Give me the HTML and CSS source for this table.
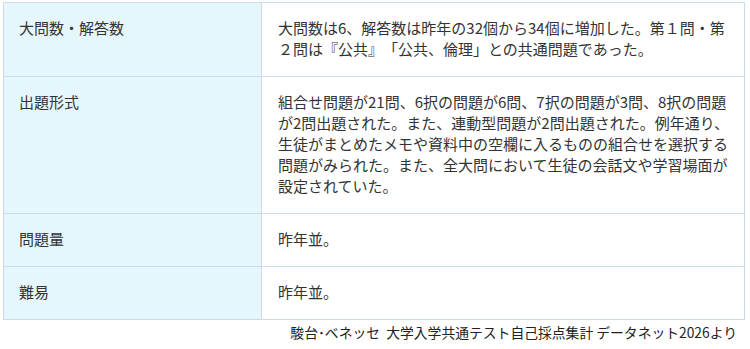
FILE: index.html
```html
<!DOCTYPE html>
<html lang="ja">
<head>
<meta charset="utf-8">
<link rel="stylesheet" href="styles.css">
</head>
<body>
<div class="wrap">
  <table class="info">
    <tbody>
      <tr>
        <th>大問数・解答数</th>
        <td>大問数は6、解答数は昨年の32個から34個に増加した。第１問・第２問は『公共』「公共、倫理」との共通問題であった。</td>
      </tr>
      <tr>
        <th>出題形式</th>
        <td>組合せ問題が21問、6択の問題が6問、7択の問題が3問、8択の問題が2問出題された。また、連動型問題が2問出題された。例年通り、生徒がまとめたメモや資料中の空欄に入るものの組合せを選択する問題がみられた。また、全大問において生徒の会話文や学習場面が設定されていた。</td>
      </tr>
      <tr>
        <th>問題量</th>
        <td>昨年並。</td>
      </tr>
      <tr>
        <th>難易</th>
        <td>昨年並。</td>
      </tr>
    </tbody>
  </table>
  <p class="credit">駿台･ベネッセ&nbsp;&nbsp;大学入学共通テスト自己採点集計 データネット2026より</p>
</div>
</body>
</html>
```
FILE: styles.css
```css
html, body {
  margin: 0;
  padding: 0;
  background: #ffffff;
}
body {
  font-family: "Noto Sans CJK JP", "Noto Sans", sans-serif;
  color: #333333;
  text-spacing-trim: space-all;
}
.wrap {
  padding: 2px 5px 0 3px;
}
.info {
  width: 742px;
  border-collapse: collapse;
  font-size: 15px;
  line-height: 21px;
}
.info th,
.info td {
  border: 1px solid #c8dde6;
  vertical-align: top;
  text-align: left;
  font-weight: normal;
  padding: 14px 16px 17px 16px;
}
.info th {
  width: 226px;
  background: #e6f6fd;
  padding-left: 15px;
}
.info td {
  background: #ffffff;
  padding-right: 9px;
}
.credit {
  margin: 2px 0 0 0;
  text-align: right;
  padding-right: 8px;
  font-size: 13.8px;
  line-height: 20px;
  color: #222222;
}
```
